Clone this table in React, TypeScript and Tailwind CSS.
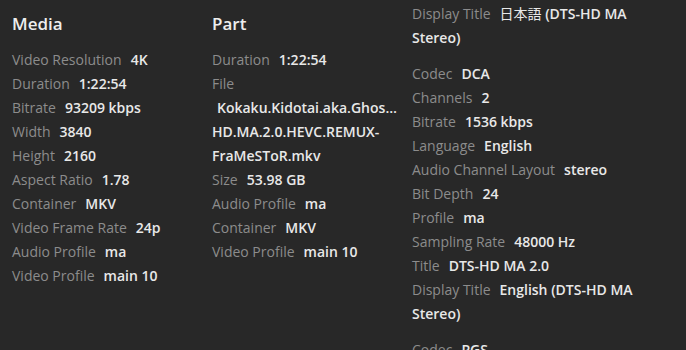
import React from 'react';

type Row = [string, React.ReactNode];

const media: Row[] = [
  ['Video Resolution', '4K'],
  ['Duration', '1:22:54'],
  ['Bitrate', '93209 kbps'],
  ['Width', '3840'],
  ['Height', '2160'],
  ['Aspect Ratio', '1.78'],
  ['Container', 'MKV'],
  ['Video Frame Rate', '24p'],
  ['Audio Profile', 'ma'],
  ['Video Profile', 'main 10'],
];

const partAfter: Row[] = [
  ['Size', '53.98 GB'],
  ['Audio Profile', 'ma'],
  ['Container', 'MKV'],
  ['Video Profile', 'main 10'],
];

const streams: Row[][] = [
  [['Display Title', <><span className="font-normal">日本語</span> (DTS-HD MA Stereo)</>]],
  [
    ['Codec', 'DCA'],
    ['Channels', '2'],
    ['Bitrate', '1536 kbps'],
    ['Language', 'English'],
    ['Audio Channel Layout', 'stereo'],
    ['Bit Depth', '24'],
    ['Profile', 'ma'],
    ['Sampling Rate', '48000 Hz'],
    ['Title', 'DTS-HD MA 2.0'],
    ['Display Title', 'English (DTS-HD MA Stereo)'],
  ],
  [['Codec', 'PGS']],
];

function Item({ label, value }: { label: string; value: React.ReactNode }) {
  return (
    <li className="leading-6">
      <span className="text-[#8c8c8c] mr-[9px]">{label}</span>
      <span className="text-[#e8e8e8] font-semibold">{value}</span>
    </li>
  );
}

export default function App() {
  return (
    <div
      className="w-[686px] h-[350px] overflow-hidden bg-[#282828] flex text-[14px]"
      style={{ fontFamily: '"Open Sans", "Noto Sans CJK JP", sans-serif' }}
    >
      <div className="w-[200px] pl-3 pr-[10px] pt-[10px]">
        <h2 className="text-[17px] font-semibold text-[#eeeeee] leading-7 mb-[10px]">Media</h2>
        <ul>
          {media.map(([l, v]) => <Item key={l} label={l} value={v} />)}
        </ul>
      </div>
      <div className="w-[200px] pl-3 pr-[3px] pt-[10px]">
        <h2 className="text-[17px] font-semibold text-[#eeeeee] leading-7 mb-[10px]">Part</h2>
        <ul>
          <Item label="Duration" value="1:22:54" />
          <li className="leading-6 text-[#8c8c8c]">File</li>
          <li className="leading-6 text-[#e8e8e8] font-semibold">
            <div className="pl-[5px] truncate">Kokaku.Kidotai.aka.Ghost.in.the.Shell.1995.2160p.UHD.BluRay.DTS-</div>
            <div>HD.MA.2.0.HEVC.REMUX-</div>
            <div>FraMeSToR.mkv</div>
          </li>
          {partAfter.map(([l, v]) => <Item key={l} label={l} value={v} />)}
        </ul>
      </div>
      <div className="flex-1 pl-3 pr-3 pt-[2px]">
        {streams.map((s, i) => (
          <ul key={i} className="mb-3">
            {s.map(([l], j) => <Item key={l + j} label={l} value={s[j][1]} />)}
          </ul>
        ))}
      </div>
    </div>
  );
}
